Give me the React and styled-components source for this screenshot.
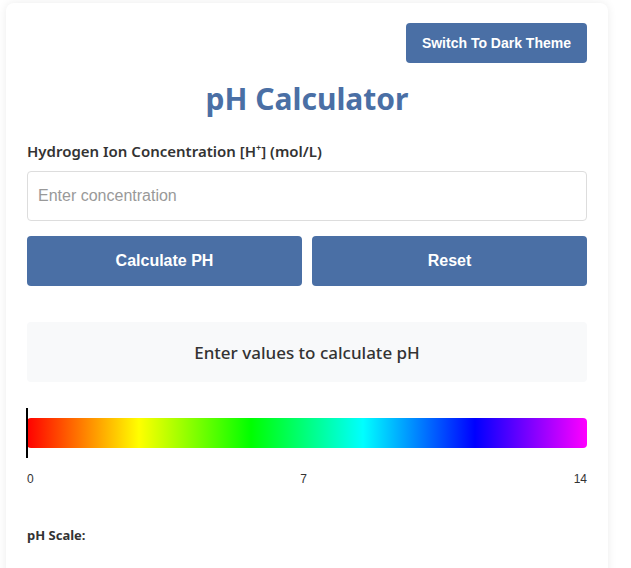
import { useState } from "react";
import styled, { createGlobalStyle } from "styled-components";

const GlobalStyle = createGlobalStyle`
  * { box-sizing: border-box; }
  body {
    margin: 0;
    background: #ffffff;
    font-family: "Noto Sans", "Open Sans", sans-serif;
  }
`;

const Card = styled.div`
  width: 602px;
  margin: 3px 0 0 6px;
  padding: 20px 21px 20px;
  background: #fff;
  border-radius: 8px;
  box-shadow: 0 0 10px rgba(0, 0, 0, 0.08);
  min-height: 580px;
`;

const TopBar = styled.div`
  display: flex;
  justify-content: flex-end;
`;

const Button = styled.button`
  height: ${(p) => (p.$small ? "40px" : "50px")};
  padding: 0 16px;
  border: none;
  border-radius: 4px;
  background: #4a6fa5;
  color: #fff;
  font-family: "Liberation Sans", Arial, sans-serif;
  font-weight: 700;
  font-size: ${(p) => (p.$small ? "14px" : "16px")};
  cursor: pointer;
  flex: ${(p) => (p.$small ? "none" : "1")};
`;

const Title = styled.h1`
  margin: 18px 0 0;
  text-align: center;
  color: #4a6fa5;
  font-size: 30px;
  line-height: 36px;
  font-weight: 700;
`;

const Label = styled.label`
  display: block;
  margin-top: 24px;
  font-size: 15px;
  line-height: 20px;
  font-weight: 600;
  color: #333;
  sup { font-size: 9px; line-height: 0; }
`;

const Input = styled.input`
  display: block;
  width: 100%;
  height: 50px;
  margin-top: 10px;
  padding: 0 10px;
  border: 1px solid #ddd;
  border-radius: 4px;
  font-family: "Liberation Sans", Arial, sans-serif;
  font-size: 16px;
  color: #333;
  outline: none;
  &::placeholder { color: #999; }
`;

const ButtonRow = styled.div`
  display: flex;
  gap: 10px;
  margin-top: 15px;
`;

const Result = styled.div`
  margin-top: 36px;
  height: 60px;
  display: flex;
  align-items: center;
  justify-content: center;
  background: #f8f9fa;
  border-radius: 4px;
  color: #333;
  font-size: 17px;
  font-weight: 500;
`;

const Scale = styled.div`
  position: relative;
  margin-top: 26px;
  padding: 10px 0;
`;

const Bar = styled.div`
  height: 30px;
  border-radius: 4px;
  background: linear-gradient(to right, #ff0000, #ffff00, #00ff00, #00ffff, #0000ff, #ff00ff);
`;

const Indicator = styled.div`
  position: absolute;
  top: 0;
  bottom: 0;
  width: 2px;
  margin-left: -1px;
  background: #000;
`;

const Ticks = styled.div`
  display: flex;
  justify-content: space-between;
  margin-top: 14px;
  font-family: "Liberation Sans", Arial, sans-serif;
  font-size: 12px;
  line-height: 14px;
  color: #333;
`;

const Heading = styled.h3`
  margin: 41px 0 0;
  font-size: 13px;
  line-height: 16px;
  font-weight: 700;
  color: #333;
`;

export default function App() {
  const [value, setValue] = useState("");
  const [ph, setPh] = useState(null);

  const calculate = () => {
    const c = parseFloat(value);
    if (c > 0) setPh(-Math.log10(c));
  };

  const pos = ph === null ? 0 : Math.min(Math.max(ph, 0), 14) / 14 * 100;

  return (
    <>
      <GlobalStyle />
      <Card>
        <TopBar>
          <Button $small>Switch To Dark Theme</Button>
        </TopBar>
        <Title>pH Calculator</Title>
        <Label htmlFor="conc">
          Hydrogen Ion Concentration [H<sup>+</sup>] (mol/L)
        </Label>
        <Input
          id="conc"
          placeholder="Enter concentration"
          value={value}
          onChange={(e) => setValue(e.target.value)}
        />
        <ButtonRow>
          <Button onClick={calculate}>Calculate PH</Button>
          <Button onClick={() => { setValue(""); setPh(null); }}>Reset</Button>
        </ButtonRow>
        <Result>
          {ph === null ? "Enter values to calculate pH" : `pH = ${ph.toFixed(2)}`}
        </Result>
        <Scale>
          <Bar />
          <Indicator style={{ left: `${pos}%` }} />
        </Scale>
        <Ticks>
          <span>0</span>
          <span>7</span>
          <span>14</span>
        </Ticks>
        <Heading>pH Scale:</Heading>
      </Card>
    </>
  );
}
